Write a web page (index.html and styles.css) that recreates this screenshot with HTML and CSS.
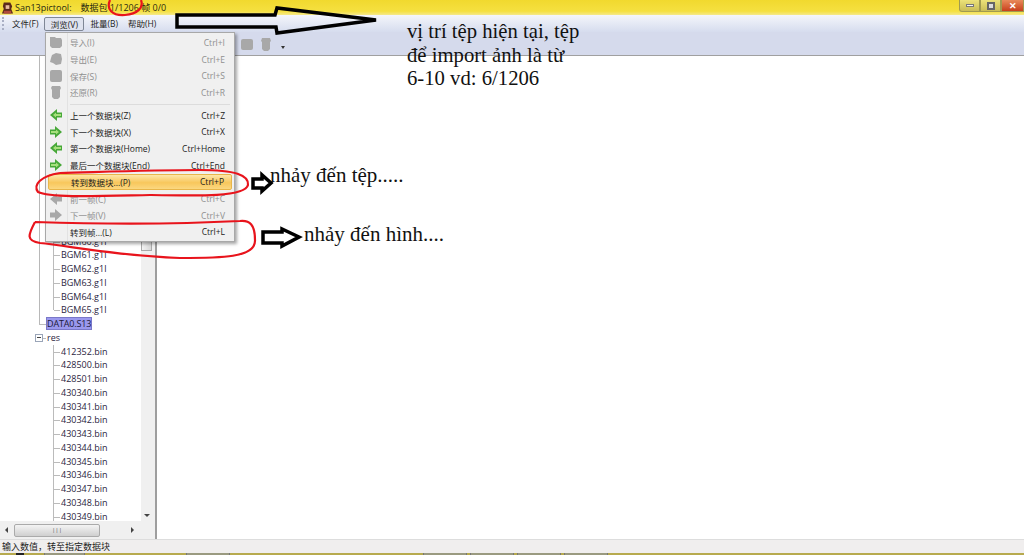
FILE: index.html
```html
<!DOCTYPE html>
<html lang="vi">
<head>
<meta charset="utf-8">
<title>San13pictool</title>
<link rel="stylesheet" href="styles.css">
</head>
<body>
<div class="window">
  <header class="titlebar">
    <svg class="app-icon" width="13" height="14" viewBox="0 0 14 14"><path d="M3 1h7l2 4-1 3 2 5H1l2-5-1-3z" fill="#5a2a1c"/><path d="M5 4h4v4H5z" fill="#e8bda0"/><path d="M3 10h8v3H3z" fill="#b04a3a"/></svg>
    <span class="title-name">San13pictool:</span>
    <span class="title-status">数据包 1/1206 帧 0/0</span>
    <div class="win-buttons">
      <span class="win-btn"><i class="min-glyph"></i></span>
      <span class="win-btn"><i class="max-glyph"></i></span>
      <span class="win-btn close"><i class="close-glyph">✕</i></span>
    </div>
  </header>
  <nav class="menubar">
    <span class="grip"></span>
    <span class="menu-title">文件(F)</span>
    <span class="menu-title open">浏览(V)</span>
    <span class="menu-title">批量(B)</span>
    <span class="menu-title">帮助(H)</span>
  </nav>
  <div class="toolbar">
    <svg class="tool-icon" width="14" height="14" viewBox="0 0 14 14"><rect x="1" y="2" width="12" height="11" rx="2" fill="#a8a8a8"/></svg>
    <svg class="tool-icon" width="14" height="14" viewBox="0 0 14 14"><path d="M3 1h8l1 3-1 1v7l-2 2H5l-2-2V5L2 4z" fill="#a8a8a8"/></svg>
    <span class="tool-more"></span>
  </div>
  <main class="workspace">
    <aside class="tree-panel">
      <div class="tree-body">
        <ul class="tree">
          <li class="leaf">BGM60.g1l</li>
          <li class="leaf">BGM61.g1l</li>
          <li class="leaf">BGM62.g1l</li>
          <li class="leaf">BGM63.g1l</li>
          <li class="leaf">BGM64.g1l</li>
          <li class="leaf last-leaf">BGM65.g1l</li>
          <li class="root-item"><span class="selected">DATA0.S13</span></li>
          <li class="root-item folder"><span class="expander"></span>res</li>
          <li class="leaf">412352.bin</li>
          <li class="leaf">428500.bin</li>
          <li class="leaf">428501.bin</li>
          <li class="leaf">430340.bin</li>
          <li class="leaf">430341.bin</li>
          <li class="leaf">430342.bin</li>
          <li class="leaf">430343.bin</li>
          <li class="leaf">430344.bin</li>
          <li class="leaf">430345.bin</li>
          <li class="leaf">430346.bin</li>
          <li class="leaf">430347.bin</li>
          <li class="leaf">430348.bin</li>
          <li class="leaf">430349.bin</li>
        </ul>
        <div class="vscroll">
          <span class="vthumb"></span>
          <span class="arrow-down"></span>
        </div>
      </div>
      <div class="hscroll">
        <span class="arrow-left"></span>
        <span class="hthumb">|||</span>
        <span class="arrow-right"></span>
      </div>
    </aside>
    <section class="canvas"></section>
  </main>
  <footer class="statusbar">输入数值，转至指定数据块</footer>
  <div class="taskstrip">
    <i class="task-mark"></i>
    <i class="task-btn t1"></i>
    <i class="task-btn t2"></i>
    <i class="task-btn t3"></i>
    <i class="task-btn t4"></i>
    <i class="task-btn t4"></i>
    <i class="task-btn t4"></i>
  </div>
</div>

<div class="dropdown">
  <div class="menu-item disabled"><svg class="mi" viewBox="0 0 14 14"><path d="M1 2h5l1 1h5l1 2v6l-2 2H3l-2-2z" fill="#a8a8a8"/></svg><span class="label">导入(I)</span><span class="key">Ctrl+I</span></div>
  <div class="menu-item disabled"><svg class="mi" viewBox="0 0 14 14"><path d="M3 3l4-2 5 1 1 5-1 5-5 1-3-2-3-1 1-4z" fill="#a8a8a8"/></svg><span class="label">导出(E)</span><span class="key">Ctrl+E</span></div>
  <div class="menu-item disabled"><svg class="mi" viewBox="0 0 14 14"><rect x="1" y="1" width="12" height="12" rx="2" fill="#a8a8a8"/></svg><span class="label">保存(S)</span><span class="key">Ctrl+S</span></div>
  <div class="menu-item disabled"><svg class="mi" viewBox="0 0 14 14"><path d="M3 1h8l1 2-1 2v7l-2 2H5l-2-2V5L2 3z" fill="#a8a8a8"/></svg><span class="label">还原(R)</span><span class="key">Ctrl+R</span></div>
  <div class="menu-sep"></div>
  <div class="menu-item"><svg class="mi" viewBox="0 0 14 14"><path d="M1 7l7-6v3.5h5v5H8V13z" fill="#47a838"/><path d="M4 7l3-2.5V6h5v2H7v1.500z" fill="#a6e07c"/></svg><span class="label">上一个数据块(Z)</span><span class="key">Ctrl+Z</span></div>
  <div class="menu-item"><svg class="mi" viewBox="0 0 14 14"><path d="M13 7L6 1v3.500H1v5h5V13z" fill="#47a838"/><path d="M10 7L7 4.500V6H2v2h5v1.500z" fill="#a6e07c"/></svg><span class="label">下一个数据块(X)</span><span class="key">Ctrl+X</span></div>
  <div class="menu-item"><svg class="mi" viewBox="0 0 14 14"><path d="M1 7l7-6v3.5h5v5H8V13z" fill="#47a838"/><path d="M4 7l3-2.5V6h5v2H7v1.500z" fill="#a6e07c"/></svg><span class="label">第一个数据块(Home)</span><span class="key">Ctrl+Home</span></div>
  <div class="menu-item"><svg class="mi" viewBox="0 0 14 14"><path d="M13 7L6 1v3.500H1v5h5V13z" fill="#47a838"/><path d="M10 7L7 4.500V6H2v2h5v1.500z" fill="#a6e07c"/></svg><span class="label">最后一个数据块(End)</span><span class="key">Ctrl+End</span></div>
  <div class="menu-item active"><span class="mi"></span><span class="label">转到数据块...(P)</span><span class="key">Ctrl+P</span></div>
  <div class="menu-item disabled"><svg class="mi" viewBox="0 0 14 14"><path d="M1 7l7-6v3.500h5v5H8V13z" fill="#a8a8a8"/></svg><span class="label">前一帧(C)</span><span class="key">Ctrl+C</span></div>
  <div class="menu-item disabled"><svg class="mi" viewBox="0 0 14 14"><path d="M13 7L6 1v3.500H1v5h5V13z" fill="#a8a8a8"/></svg><span class="label">下一帧(V)</span><span class="key">Ctrl+V</span></div>
  <div class="menu-item"><span class="mi"></span><span class="label">转到帧...(L)</span><span class="key">Ctrl+L</span></div>
</div>

<svg class="marks" width="1024" height="555" viewBox="0 0 1024 555">
  <g class="red">
    <path d="M110 0C106 9 112 16 125 15C137 14 144 8 141 0"/>
    <path d="M60 173C40 176 33 185 38 192C50 198 100 196 150 195C200 196 245 197 248 185C249 175 235 170 200 170C150 170 100 172 60 173"/>
    <path d="M35 222C28 235 26 241 40 243C70 246 120 256 180 258C220 258 256 258 255 240C255 225 250 220 240 221C180 224 100 224 35 222"/>
  </g>
  <g class="black">
    <path d="M177 15H275L277 8L376 20L277 33L276 27H177Z"/>
    <path d="M253 179H262V175L271 183L262 191V188H253Z"/>
    <path d="M263 232H282V229L299 237L282 246V243H263Z"/>
  </g>
</svg>

<div class="note note-main">vị trí tệp hiện tại, tệp<br>để import ảnh là từ<br>6-10 vd: 6/1206</div>
<div class="note note-file">nhảy đến tệp.....</div>
<div class="note note-frame">nhảy đến hình....</div>
</body>
</html>
```

FILE: styles.css
```css
* { box-sizing: border-box; }
html, body { margin: 0; height: 100%; overflow: hidden; background: #fff; }
body { font-family: "Open Sans", "Noto Sans CJK SC", sans-serif; font-size: 9px; color: #222; }

.window { display: flex; flex-direction: column; width: 1024px; height: 555px; }

.titlebar {
  flex: 0 0 15px; display: flex; align-items: center; padding-left: 1px; gap: 1px;
  background: linear-gradient(#f1d92e, #f5e040 75%, #f5e98a);
  color: #2a2a10; font-size: 9px; white-space: nowrap;
}
.app-icon { flex: none; }
.title-name { margin-right: 8px; }
.win-buttons { margin-left: auto; display: flex; align-self: flex-start; height: 12px; }
.win-btn { width: 21px; display: flex; align-items: center; justify-content: center; background: linear-gradient(#ece27a, #c9bd56); border: 1px solid #a09a50; border-top: 0; }
.win-btn:first-child { border-radius: 0 0 0 3px; }
.win-btn.close { width: 23px; background: linear-gradient(#e88a5a, #c8401c); }
.min-glyph { display: block; width: 8px; height: 3px; background: #f3f3f3; border: 1px solid #777; }
.max-glyph { display: block; width: 8px; height: 8px; border: 2px solid #666; background: #ddd; }
.close-glyph { color: #fff; font-style: normal; font-size: 9px; font-weight: 700; }

.menubar {
  flex: 0 0 17px; display: flex; align-items: center; padding-left: 11px; gap: 8px;
  background: linear-gradient(#f4f6fb, #d6dcee); font-size: 8.5px;
}
.grip { position: absolute; left: 2px; top: 17px; height: 13px; border-left: 2px dotted #a9afc4; }
.menu-title { height: 14px; line-height: 13px; padding: 0 1px; white-space: nowrap; color: #222; }
.menu-title.open { background: #dfe3ef; border: 1px solid #7f8796; border-radius: 2px; padding: 0 3px; margin: 0 -3px; width: 40px; text-align: center; }

.toolbar {
  flex: 0 0 24px; display: flex; align-items: center; padding-left: 240px; gap: 5px;
  background: #d5daec; border-bottom: 1px solid #a0a0a0;
}
.tool-more { margin: 8px 0 0 3px; border: 2px solid transparent; border-top: 3px solid #333; border-bottom: 0; }

.workspace { flex: 1; display: flex; min-height: 0; }
.tree-panel { flex: 0 0 157px; display: flex; flex-direction: column; border-right: 2px solid #9e9e9e; background: #fff; }
.tree-body { flex: 1; display: flex; min-height: 0; }
.tree {
  flex: 1; list-style: none; margin: 0; padding: 178.5px 0 0 47px; overflow: hidden;
  font-size: 9px; color: #2b2540; position: relative;
  background: linear-gradient(#b8b8b8, #b8b8b8) 39px 0 / 1px 268px no-repeat;
}
.tree li { height: 13.75px; line-height: 13.75px; white-space: nowrap; position: relative; }
.tree .leaf { padding-left: 14px; }
.tree .leaf::before { content: ""; position: absolute; left: 6px; top: 0; height: 100%; border-left: 1px solid #bbb; }
.tree .leaf::after { content: ""; position: absolute; left: 7px; top: 7px; width: 6px; border-top: 1px solid #bbb; }
.tree .last-leaf::before { height: 50%; }
.root-item::before { content: ""; position: absolute; left: -8px; top: 7px; width: 7px; border-top: 1px solid #bbb; }
.selected { display: inline-block; background: #9a98ee; border: 1px solid #7a78c8; line-height: 11px; height: 13px; width: 46px; overflow: hidden; padding: 0; margin-left: -1px; color: #1a1838; letter-spacing: -0.15px; }
.folder .expander { position: absolute; left: -12px; top: 3px; width: 8px; height: 8px; background: #fff; border: 1px solid #9aa5b8; z-index: 1; }
.folder .expander::before { content: ""; position: absolute; left: 1px; top: 2px; width: 4px; border-top: 1px solid #444; }

.vscroll { flex: 0 0 14px; position: relative; background: #f0f0f0; }
.vthumb { position: absolute; left: 0; top: 184px; width: 11px; height: 11px; background: linear-gradient(90deg, #f4f4f4, #d8d8d8); border: 1px solid #aaa; }
.arrow-down { position: absolute; left: 3px; bottom: 4px; border: 3px solid transparent; border-top: 3px solid #444; border-bottom: 0; }
.hscroll { flex: 0 0 18px; display: flex; align-items: center; padding: 0 3px; background: #f0f0f0; }
.arrow-left { border: 3px solid transparent; border-right: 3px solid #444; border-left: 0; margin: 0 6px 0 2px; }
.hthumb { width: 86px; height: 13px; margin-right: 31px; line-height: 11px; text-align: center; font-size: 6px; color: #555; background: linear-gradient(#f4f4f4, #cfcfcf); border: 1px solid #aaa; border-radius: 2px; }
.arrow-right { border: 3px solid transparent; border-left: 3px solid #444; border-right: 0; }
.canvas { flex: 1; background: #fff; }

.statusbar { flex: 0 0 13px; line-height: 13px; padding-left: 2px; background: #f0eeee; font-size: 9px; color: #222; border-top: 1px solid #ddd; }
.taskstrip { flex: 0 0 2px; display: flex; padding-left: 16px; background: #b7aa4e; }
.task-mark { width: 8px; background: #222; margin-right: 20px; }
.task-btn { background: #9a9a80; border-left: 1px solid #777; border-right: 1px solid #777; }
.task-btn.t1 { width: 41px; margin-right: 101px; }
.task-btn.t2 { width: 44px; margin-right: 193px; }
.task-btn.t3 { width: 44px; margin-right: 3px; }
.task-btn.t4 { width: 44px; margin-right: 3px; }

.dropdown {
  position: absolute; left: 45px; top: 32px; width: 190px; height: 210px; padding: 1px 2px;
  background: #f0f0f0; border: 1px solid #a8a8a8; box-shadow: 2px 2px 3px rgba(0,0,0,.35);
  background-image: linear-gradient(#e2e2e2, #e2e2e2);
  background-size: 1px 100%; background-position: 21px 0; background-repeat: no-repeat;
}
.menu-item { display: flex; align-items: center; height: 16.7px; font-size: 8.5px; color: #222; white-space: nowrap; }
.menu-item.disabled { color: #8f8f8f; }
.mi { flex: 0 0 14px; width: 14px; height: 14px; margin: 0 7px 0 1px; }
.menu-item .key { margin-left: auto; padding-right: 7px; }
.menu-sep { height: 1px; margin: 3px 2px 2px 22px; background: #dcdcdc; }
.menu-item.active { background: linear-gradient(#fde7a8, #f8c75c 55%, #fbd880); border: 1px solid #e8b64a; border-radius: 2px; }

.marks { position: absolute; left: 0; top: 0; pointer-events: none; }
.red path { fill: none; stroke: #e8141c; stroke-width: 2.2; }
.black path { fill: none; stroke: #000; stroke-width: 3.5; }

.note { position: absolute; font-family: "Liberation Serif", serif; font-size: 21px; line-height: 23.5px; color: #111; white-space: nowrap; }
.note-main { left: 407px; top: 20px; font-size: 20.7px; }
.note-file { left: 270px; top: 164px; }
.note-frame { left: 304px; top: 223px; }
```
